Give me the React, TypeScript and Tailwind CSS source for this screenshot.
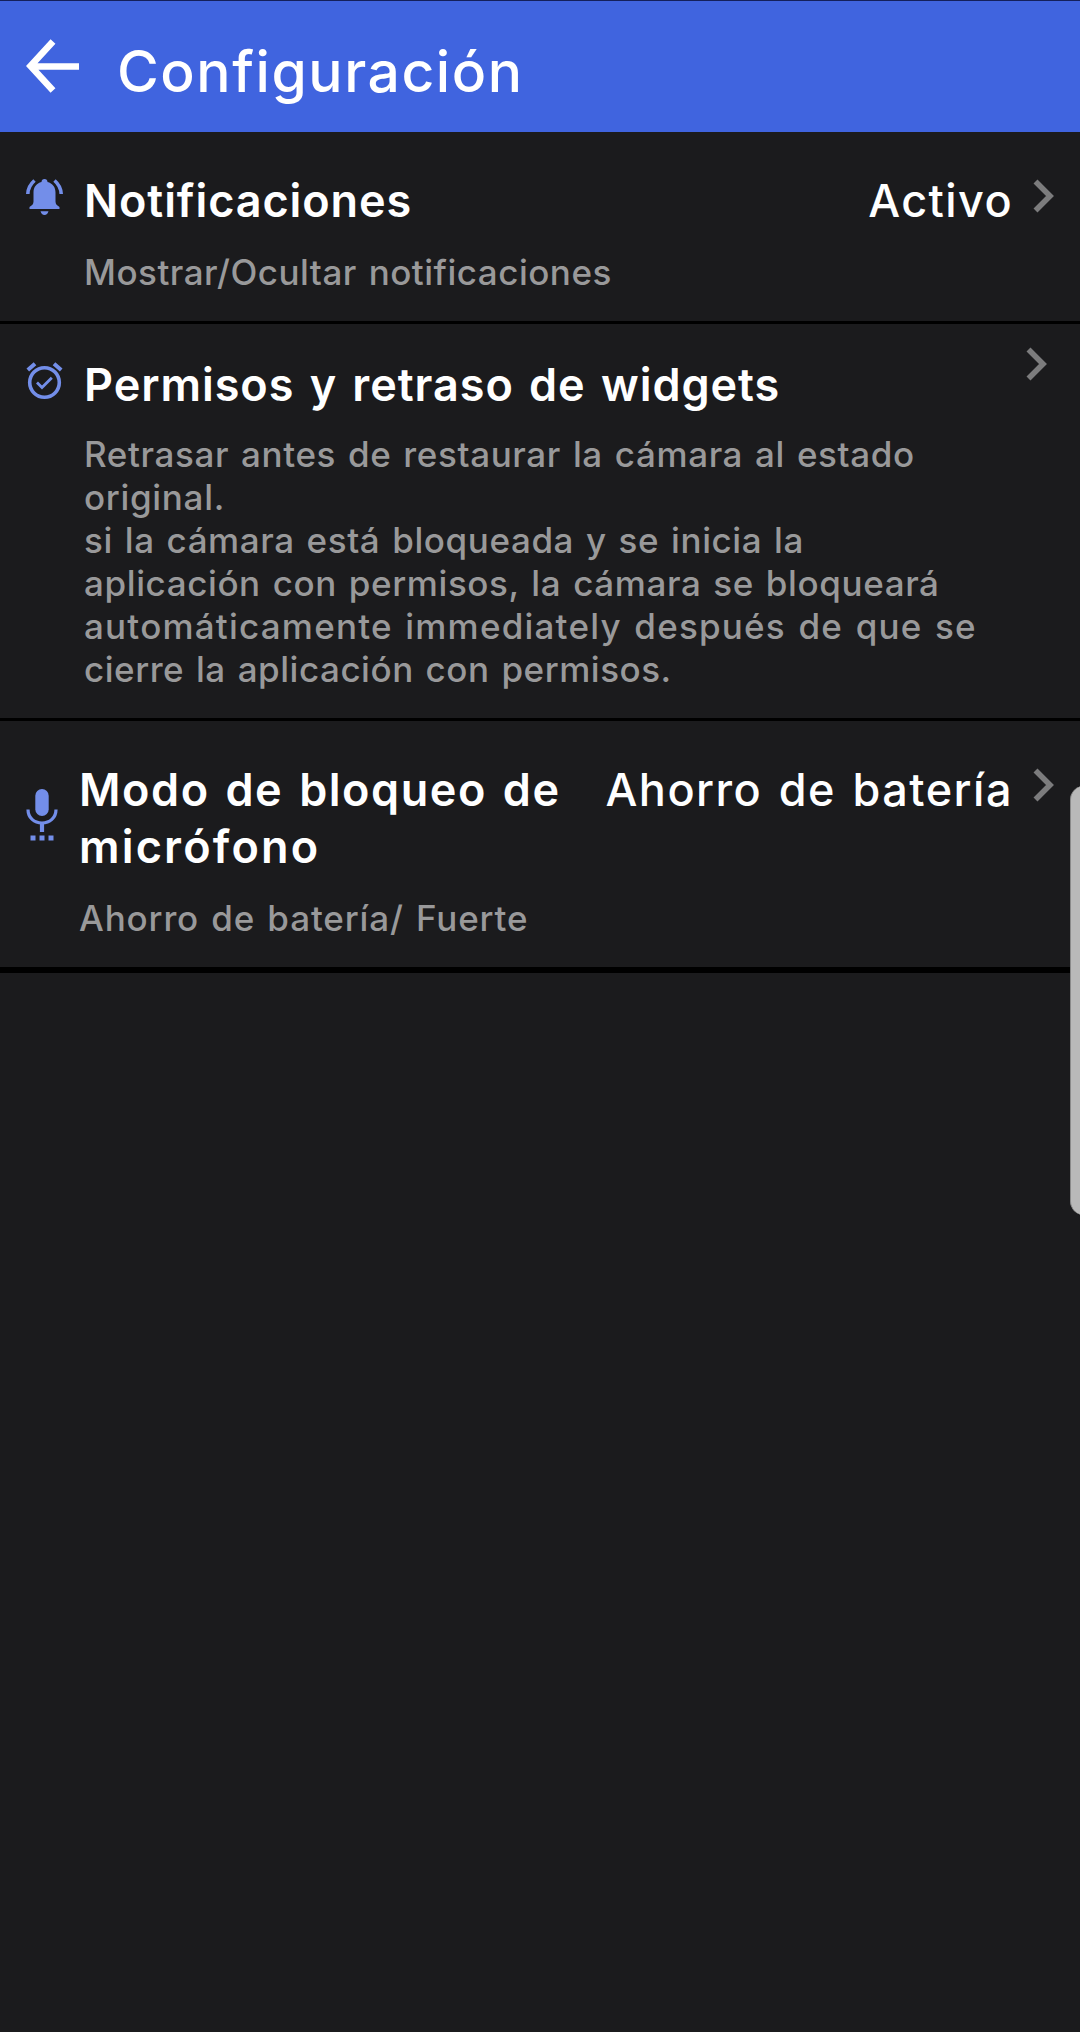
import type { ReactNode } from "react";

import classNames from "clsx";

type TLine = { text: string; className: string; }

type TSetting = {
    icon: ReactNode;
    title: TLine[];
    description: TLine[];
    value?: TLine;
    rowClass: string;
    bodyClass: string;
    descriptionClass: string;
    chevronClass: string;
}

const BellIcon = () => (
    <svg className="ml-[26px] mt-[7px] h-[37px] w-[38px] shrink-0" viewBox="0 0 38 37" fill="none">
        <path d="M18.500 0c1.800 0 3 1.200 3 3 5 1.300 8 5 8 10.500v9c0 2.500 1.500 4 4 5.500v2h-30v-2c2.500-1.500 4-3 4-5.500v-9c0-5.500 3-9.200 8-10.500 0-1.800 1.200-3 3-3z" fill="#738ee9" />
        <path d="M14.500 32.200h8c-.6 2.400-2 3.800-4 3.800s-3.400-1.400-4-3.800z" fill="#738ee9" />
        <path d="M8.500 1.500C4.500 5 2 9.500 1.800 15M28.500 1.500c4 3.500 6.500 8 6.700 13.500" stroke="#738ee9" strokeWidth="3.600" />
    </svg>
);

const AlarmIcon = () => (
    <svg className="ml-[26px] mt-[6px] h-[38px] w-[38px] shrink-0" viewBox="0 0 38 38" fill="none" stroke="#738ee9">
        <circle cx="18.500" cy="20.500" r="14.800" strokeWidth="3.600" />
        <path d="M1.800 8L9 1.800M35.200 8L28 1.800" strokeWidth="4" />
        <path d="M11 20.500l5 5 9.800-9.800" strokeWidth="2.800" />
    </svg>
);

const MicIcon = () => (
    <svg className="ml-[26px] mt-[28px] h-[52px] w-[32px] shrink-0" viewBox="0 0 32 52" fill="none">
        <rect x="9.300" y="0" width="13.400" height="27" rx="6.700" fill="#738ee9" />
        <path d="M2 20.500c0 8.500 6.300 13.500 14 13.500s14-5 14-13.500" stroke="#738ee9" strokeWidth="3.200" />
        <path d="M16 34v9" stroke="#738ee9" strokeWidth="4.200" />
        <path d="M4.500 46.500h5v5h-5zM13.500 46.500h5v5h-5zM22.500 46.500h5v5h-5z" fill="#738ee9" />
    </svg>
);

const Chevron = ({ className }: { className: string }) => (
    <svg className={classNames("h-[34px] w-[22px] shrink-0", className)} viewBox="0 0 22 34" fill="none">
        <path d="M2.500 2.500L17 17 2.500 31.500" stroke="#7c7c7d" strokeWidth="5.600" />
    </svg>
);

const SETTINGS: TSetting[] = [
    {
        icon: <BellIcon />,
        title: [{ text: "Notificaciones", className: "tracking-[0.9px]" }],
        description: [{ text: "Mostrar/Ocultar notificaciones", className: "tracking-[0.5px]" }],
        value: { text: "Activo", className: "tracking-[1.4px]" },
        rowClass: "h-[192px] pt-10 border-b-[3px]",
        bodyClass: "ml-5",
        descriptionClass: "mt-[22px]",
        chevronClass: "ml-5 mt-[7px] mr-[25px]",
    },
    {
        icon: <AlarmIcon />,
        title: [{ text: "Permisos y retraso de widgets", className: "tracking-[0.95px] [word-spacing:3px]" }],
        description: [
            { text: "Retrasar antes de restaurar la cámara al estado", className: "tracking-[0.615px]" },
            { text: "original.", className: "tracking-[0.68px]" },
            { text: "si la cámara está bloqueada y se inicia la", className: "tracking-[0.585px]" },
            { text: "aplicación con permisos, la cámara se bloqueará", className: "tracking-[0.6px]" },
            { text: "automáticamente immediately después de que se", className: "tracking-[1.21px]" },
            { text: "cierre la aplicación con permisos.", className: "tracking-[0.53px]" },
        ],
        rowClass: "h-[397px] pt-8 border-b-[3px]",
        bodyClass: "ml-5",
        descriptionClass: "mt-5",
        chevronClass: "-mt-[9px] mr-[32px]",
    },
    {
        icon: <MicIcon />,
        title: [
            { text: "Modo de bloqueo de", className: "tracking-[1.55px] [word-spacing:3px]" },
            { text: "micrófono", className: "tracking-[2.2px]" },
        ],
        description: [{ text: "Ahorro de batería/ Fuerte", className: "tracking-[0.85px]" }],
        value: { text: "Ahorro de batería", className: "tracking-[1.5px] [word-spacing:3px]" },
        rowClass: "h-[252px] pt-10 border-b-[6px]",
        bodyClass: "ml-[21px]",
        descriptionClass: "mt-[22px]",
        chevronClass: "ml-5 mt-[7px] mr-[25px]",
    },
];

function SettingRow({ setting }: { setting: TSetting }) {
    return (
        <section className={classNames("flex items-start border-black", setting.rowClass)}>
            {setting.icon}
            <div className={classNames("min-w-0 flex-1", setting.bodyClass)}>
                <h2 className="text-[45px] leading-[57px] font-semibold whitespace-nowrap">
                    {setting.title.map((line) => (
                        <span key={line.text} className={classNames("block", line.className)}>{line.text}</span>
                    ))}
                </h2>
                <p className={classNames("text-[35px] leading-[43px] font-medium text-[#99999a] whitespace-nowrap [word-spacing:2px]", setting.descriptionClass)}>
                    {setting.description.map((line) => (
                        <span key={line.text} className={classNames("block", line.className)}>{line.text}</span>
                    ))}
                </p>
            </div>
            {setting.value ? (
                <span className={classNames("text-[45px] leading-[57px] font-medium whitespace-nowrap", setting.value.className)}>
                    {setting.value.text}
                </span>
            ) : null}
            <Chevron className={setting.chevronClass} />
        </section>
    );
}

export default function App() {
    return (
        <div className="relative h-[2032px] w-[1080px] overflow-hidden bg-[#1b1b1d] font-['Inter',sans-serif] text-white">
            <header className="flex h-[132px] items-start border-t border-[#14205c] bg-[#4064df]">
                <svg className="ml-[26px] mt-[38px] h-[54px] w-[54px]" viewBox="0 0 54 54" fill="none">
                    <path d="M27 2.500L4.500 27 27 51.500M4.500 27.500H53" stroke="#fff" strokeWidth="6.600" />
                </svg>
                <h1 className="ml-[37px] mt-[39px] text-[57px] leading-[64px] font-medium tracking-[1.55px]">Configuración</h1>
            </header>

            <main>
                {SETTINGS.map((setting) => (
                    <SettingRow key={setting.title[0].text} setting={setting} />
                ))}
            </main>

            {/* edge panel handle */}
            <div className="absolute top-[786px] -right-[5px] h-[429px] w-[15px] rounded-l-[14px] border-l border-[#8a8a8a] bg-[#b9b9b9]" />
        </div>
    );
}
